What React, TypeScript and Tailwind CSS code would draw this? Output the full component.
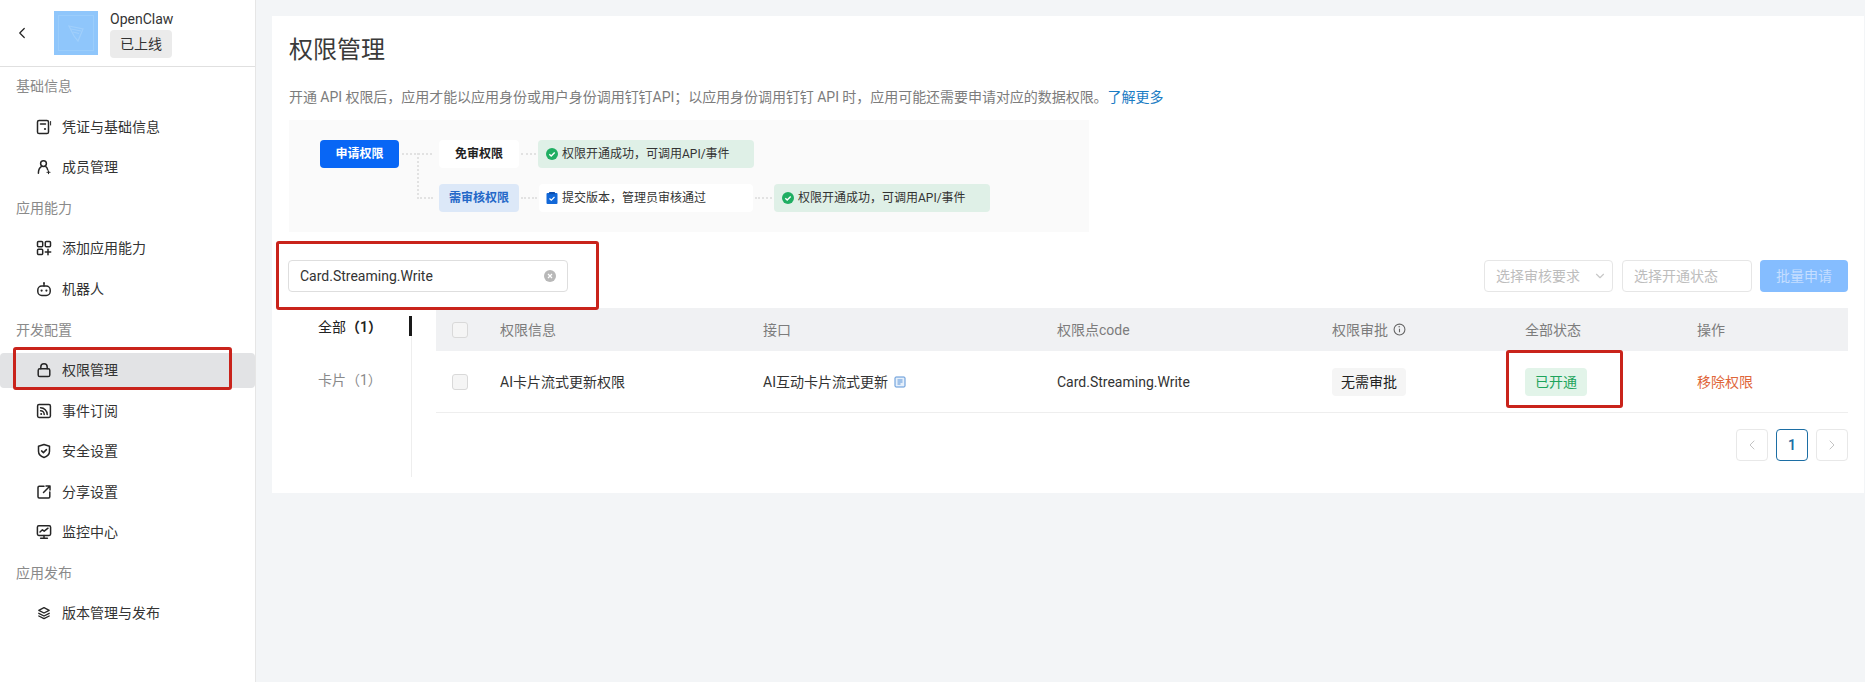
import { ChevronDown, ChevronLeft, ChevronRight } from "lucide-react";
import type { ReactNode } from "react";

const fontStack = "font-['Roboto','Noto_Sans_CJK_SC',sans-serif]";

const Icon = ({ children }: { children: ReactNode }) => (
  <svg
    viewBox="0 0 16 16"
    fill="none"
    stroke="#262626"
    strokeWidth="1.5"
    strokeLinecap="round"
    strokeLinejoin="round"
    className="h-4 w-4 shrink-0"
  >
    {children}
  </svg>
);

const navIcons: Record<string, ReactNode> = {
  cred: (
    <Icon>
      <rect x="1.5" y="1.5" width="11" height="13" rx="1.6" />
      <path d="M4.5 5h5" />
      <circle cx="9" cy="10" r="1.1" fill="#262626" stroke="none" />
      <path d="M14.6 2.5v3.5" strokeWidth="1" />
    </Icon>
  ),
  member: (
    <Icon>
      <circle cx="7.5" cy="4.6" r="2.9" />
      <path d="M2.4 14.2c0-3 .9-5.3 2.9-6.6M9.800 7.700c1 .6 1.600 1.600 1.900 3.100" />
      <path d="M11 13.200h3M12.500 11.900v2.700" strokeWidth="1.100" />
    </Icon>
  ),
  add: (
    <Icon>
      <rect x="1.5" y="1.5" width="5.2" height="5.2" rx="1" />
      <rect x="9.3" y="1.5" width="5.2" height="5.2" rx="1" />
      <rect x="1.5" y="9.3" width="5.2" height="5.2" rx="1" />
      <path d="M12 9.300v5.400M9.300 12h5.400" />
    </Icon>
  ),
  bot: (
    <Icon>
      <rect x="1.8" y="5" width="12.4" height="9.4" rx="4" />
      <path d="M8 5V2.400" />
      <circle cx="8" cy="1.900" r="0.9" fill="#262626" stroke="none" />
      <circle cx="5.600" cy="9.600" r="1.1" fill="#262626" stroke="none" />
      <circle cx="10.400" cy="9.600" r="1.1" fill="#262626" stroke="none" />
    </Icon>
  ),
  lock: (
    <Icon>
      <rect x="2.2" y="6.8" width="11.6" height="7.7" rx="1.6" />
      <path d="M4.800 6.800V5a3.200 3.200 0 0 1 6.400 0v1.800" />
    </Icon>
  ),
  rss: (
    <Icon>
      <rect x="1.6" y="1.6" width="12.8" height="12.8" rx="1.4" />
      <path d="M4.600 4.800c3.600 0 6.600 3 6.600 6.600M4.600 7.800c2 0 3.600 1.600 3.600 3.600" />
      <circle cx="5.200" cy="10.900" r="1" fill="#262626" stroke="none" />
    </Icon>
  ),
  shield: (
    <Icon>
      <path d="M8 1.500l5.500 1.800v5c0 3.200-2.400 5.200-5.500 6.200-3.100-1-5.500-3-5.500-6.200v-5z" />
      <path d="M5.600 7.900l1.800 1.700 3-3" />
    </Icon>
  ),
  share: (
    <Icon>
      <path d="M8 2.200H3.200A1.200 1.200 0 0 0 2 3.400v9.400A1.200 1.200 0 0 0 3.200 14h9.400a1.200 1.200 0 0 0 1.200-1.200V8" />
      <path d="M7.500 8.500L14 2M10 2h4v4" />
    </Icon>
  ),
  monitor: (
    <Icon>
      <rect x="1.4" y="1.8" width="13.2" height="9.600" rx="1.4" />
      <path d="M4 8l2.400-2.200 1.800 1.400L12 4.200" />
      <path d="M8 11.400v2.600M4.600 14.200h6.800" />
    </Icon>
  ),
  layers: (
    <Icon>
      <path d="M8 2.600l5.200 2.700L8 8 2.800 5.300z" strokeWidth="1.3" />
      <path d="M2.800 8.300L8 11l5.200-2.700M2.800 11L8 13.700l5.200-2.700" strokeWidth="1.3" />
    </Icon>
  ),
};

const navGroups = [
  {
    label: "基础信息",
    items: [
      { icon: "cred", text: "凭证与基础信息" },
      { icon: "member", text: "成员管理" },
    ],
  },
  {
    label: "应用能力",
    items: [
      { icon: "add", text: "添加应用能力" },
      { icon: "bot", text: "机器人" },
    ],
  },
  {
    label: "开发配置",
    items: [
      { icon: "lock", text: "权限管理", active: true },
      { icon: "rss", text: "事件订阅" },
      { icon: "shield", text: "安全设置" },
      { icon: "share", text: "分享设置" },
      { icon: "monitor", text: "监控中心" },
    ],
  },
  {
    label: "应用发布",
    items: [{ icon: "layers", text: "版本管理与发布" }],
  },
];

const CheckDot = () => (
  <svg viewBox="0 0 12 12" className="h-3 w-3 shrink-0">
    <circle cx="6" cy="6" r="6" fill="#1fae62" />
    <path d="M3.300 6.200l1.900 1.800 3.500-3.600" fill="none" stroke="#fff" strokeWidth="1.400" />
  </svg>
);

const ClipIcon = () => (
  <svg viewBox="0 0 12 12" className="h-3 w-3 shrink-0">
    <rect x="0.5" y="1" width="11" height="11" rx="1" fill="#1268d8" />
    <rect x="3" y="0" width="6" height="2.200" rx="0.5" fill="#0d4fb0" />
    <path d="M3.500 6.500l1.800 1.700 3.200-3.200" fill="none" stroke="#fff" strokeWidth="1.200" />
  </svg>
);

const Success = () => (
  <div className="flex h-7 w-[216px] items-center gap-1 rounded bg-[#dff0e7] pl-2 text-xs text-[#333]">
    <CheckDot />
    权限开通成功，可调用API/事件
  </div>
);

const Dots = () => <div className="w-full border-t-2 border-dotted border-[#e2e2e2]" />;

const cols = "grid grid-cols-[64px_263px_294px_275px_193px_172px_151px] items-center";

const Checkbox = () => (
  <span className="ml-4 block h-4 w-4 rounded-[3px] border border-[#d9d9d9] bg-[#f5f5f5]" />
);

const App = () => {
  return (
    <div className={`flex h-[682px] w-full overflow-hidden bg-[#f3f5f7] text-sm text-[#333] ${fontStack}`}>
      {/* Sidebar */}
      <aside className="relative w-[256px] shrink-0 border-r border-[#e6e6e6] bg-white">
        <div className="flex h-[67px] items-center border-b border-[#e0e0e0] pl-[13px]">
          <ChevronLeft className="h-[18px] w-[18px] text-[#222]" strokeWidth={1.6} />
          <div className="ml-[23px] h-11 w-11 bg-[#8fc6fb] p-1">
            <div className="flex h-full w-full items-center justify-center border border-[#9bcdfb]">
              <svg viewBox="0 0 24 24" className="h-6 w-6" fill="none" stroke="#a0cffb" strokeWidth="1.2">
                <path d="M5 5l14 3-5 12-4-5z" />
                <path d="M7 8l10 2M9 11l6 1.500" />
              </svg>
            </div>
          </div>
          <div className="ml-3">
            <div className="pt-px text-sm leading-[18px] text-[#333]">OpenClaw</div>
            <div className="mt-[2px] flex h-7 w-[62px] items-center justify-center rounded bg-[#ebebeb] text-sm text-[#333]">
              已上线
            </div>
          </div>
        </div>
        <div className="-mt-px">
          {navGroups.map((group) => (
            <div key={group.label}>
              <div className="flex h-[40.55px] items-center pl-4 text-[#8a8a8a]">{group.label}</div>
              {group.items.map((item) => (
                <div key={item.text} className="flex h-[40.55px] items-center">
                  <div
                    className={`flex h-[35px] w-full items-center gap-[10px] rounded pl-[36px] ${
                      item.active ? "bg-[#e2e3e5]" : ""
                    }`}
                  >
                    {navIcons[item.icon]}
                    <span className="text-[#333]">{item.text}</span>
                  </div>
                </div>
              ))}
            </div>
          ))}
        </div>
        <div className="absolute left-[13px] top-[347px] h-[43px] w-[219px] rounded-[3px] border-[3px] border-[#c9231b]" />
      </aside>

      {/* Main card */}
      <main className="flex-1 pl-4 pr-px pt-4">
        <div className="relative h-[477px] bg-white px-4 pt-[17px]">
          <h1 className="ml-px text-2xl leading-[34px] font-normal text-[#3a3a3a]">权限管理</h1>
          <p className="ml-px mt-5 leading-[20px] tracking-[-0.04px] text-[#7c7c7c]">
            开通 API 权限后，应用才能以应用身份或用户身份调用钉钉API；以应用身份调用钉钉 API 时，应用可能还需要申请对应的数据权限。
            <span className="text-[#1a7cc4]">了解更多</span>
          </p>

          {/* Approval flow */}
          <div className="relative ml-px mt-[13px] h-[112px] w-[800px] bg-[#fafafa] pl-[31px] pt-5 text-xs">
            <div className="flex h-7 items-center">
              <div className="flex h-7 w-[79px] items-center justify-center rounded bg-[#0866f5] font-semibold text-white">
                申请权限
              </div>
              <div className="w-10 pl-[3px] pr-[7px]">
                <Dots />
              </div>
              <div className="flex h-7 w-20 items-center justify-center rounded bg-white font-semibold text-[#222]">
                免审权限
              </div>
              <div className="w-[19px] px-[2px]">
                <Dots />
              </div>
              <Success />
            </div>
            <div className="mt-4 flex h-7 items-center pl-[119px]">
              <div className="flex h-7 w-20 items-center justify-center rounded bg-[#dce8f8] font-semibold text-[#2468c8]">
                需审核权限
              </div>
              <div className="w-5 px-[2px]">
                <Dots />
              </div>
              <div className="flex h-7 w-[214px] items-center gap-1 rounded bg-white pl-[7px] text-[#333]">
                <ClipIcon />
                提交版本，管理员审核通过
              </div>
              <div className="w-[21px] px-[2px]">
                <Dots />
              </div>
              <Success />
            </div>
            <div className="absolute left-[128px] top-[33px] h-[46px] w-[16px] border-b-2 border-l-2 border-dotted border-[#e2e2e2]" />
          </div>

          {/* Toolbar */}
          <div className="mt-7 flex h-8 items-center">
            <div className="flex h-8 w-[280px] items-center justify-between rounded border border-[#dedede] pl-[11px] pr-[11px] text-[#333]">
              Card.Streaming.Write
              <svg viewBox="0 0 12 12" className="h-3 w-3">
                <circle cx="6" cy="6" r="6" fill="#b8b8b8" />
                <path d="M4 4l4 4M8 4l-4 4" stroke="#fff" strokeWidth="1.200" />
              </svg>
            </div>
            <div className="ml-auto flex h-8 w-[129px] items-center justify-between rounded border border-[#e6e6e6] pl-[11px] pr-[5px] text-[#bdbdbd]">
              选择审核要求
              <ChevronDown className="h-[14px] w-[14px] text-[#c8c8c8]" />
            </div>
            <div className="ml-[9px] flex h-8 w-[130px] items-center rounded border border-[#e6e6e6] pl-[11px] text-[#bdbdbd]">
              选择开通状态
            </div>
            <div className="ml-2 flex h-8 w-[88px] items-center justify-center rounded bg-[#85bdff] text-[#c4deff]">
              批量申请
            </div>
          </div>

          <div className="mt-4 flex">
            {/* Category tabs */}
            <div className="relative mt-2 h-[161px] w-[124px] border-r border-[#eeeeee] pl-[30px]">
              <div className="flex h-[22px] items-center text-[#222]">
                全部<span className="font-semibold">（1）</span>
              </div>
              <div className="mt-[31px] flex h-[22px] items-center text-[#8a8a8a]">卡片（1）</div>
              <div className="absolute right-[-1px] top-0 h-5 w-[3px] bg-[#1a1a1a]" />
            </div>

            {/* Permission table */}
            <div className="ml-6 flex-1">
              <div className={`${cols} h-[43px] bg-[#f0f1f3] text-[#7c7c7c]`}>
                <Checkbox />
                <span>权限信息</span>
                <span>接口</span>
                <span>权限点code</span>
                <span className="flex items-center gap-[5px]">
                  权限审批
                  <svg viewBox="0 0 12 12" className="h-[13px] w-[13px]" fill="none" stroke="#666" strokeWidth="1">
                    <circle cx="6" cy="6" r="5" />
                    <path d="M6 5.200v3.300M5 3.500h1v.5" />
                  </svg>
                </span>
                <span>全部状态</span>
                <span>操作</span>
              </div>
              <div className={`${cols} h-[62px] border-b border-[#eeeeee] text-[#333]`}>
                <Checkbox />
                <span>AI卡片流式更新权限</span>
                <span className="flex items-center gap-[6px]">
                  AI互动卡片流式更新
                  <svg viewBox="0 0 12 12" className="h-3 w-3" fill="none" stroke="#5b93d6" strokeWidth="1">
                    <rect x="1" y="1" width="10" height="10" rx="1" fill="#e6f0fb" />
                    <path d="M3.500 4h5M3.500 6h5M3.500 8h3" />
                  </svg>
                </span>
                <span>Card.Streaming.Write</span>
                <span className="flex h-7 w-[74px] items-center justify-center rounded bg-[#f5f5f5] text-[#222]">
                  无需审批
                </span>
                <span className="flex h-7 w-[62px] items-center justify-center rounded bg-[#e2f4e9] text-[#1ea45c]">
                  已开通
                </span>
                <span className="text-[#e0663a]">移除权限</span>
              </div>
              <div className="mt-4 flex justify-end gap-2">
                <div className="flex h-8 w-8 items-center justify-center rounded border border-[#e8e8e8] text-[#c4c4c4]">
                  <ChevronLeft className="h-4 w-4" strokeWidth={1.5} />
                </div>
                <div className="flex h-8 w-8 items-center justify-center rounded border border-[#1c6ea4] font-semibold text-[#1c6ea4]">
                  1
                </div>
                <div className="flex h-8 w-8 items-center justify-center rounded border border-[#e8e8e8] text-[#c4c4c4]">
                  <ChevronRight className="h-4 w-4" strokeWidth={1.5} />
                </div>
              </div>
            </div>
          </div>

          {/* Red annotation boxes */}
          <div className="absolute left-[4px] top-[225px] h-[69px] w-[323px] rounded-[3px] border-[3px] border-[#c9231b]" />
          <div className="absolute left-[1234px] top-[334px] h-[58px] w-[117px] rounded-[3px] border-[3px] border-[#c9231b]" />
        </div>
      </main>
    </div>
  );
};

export default App;
